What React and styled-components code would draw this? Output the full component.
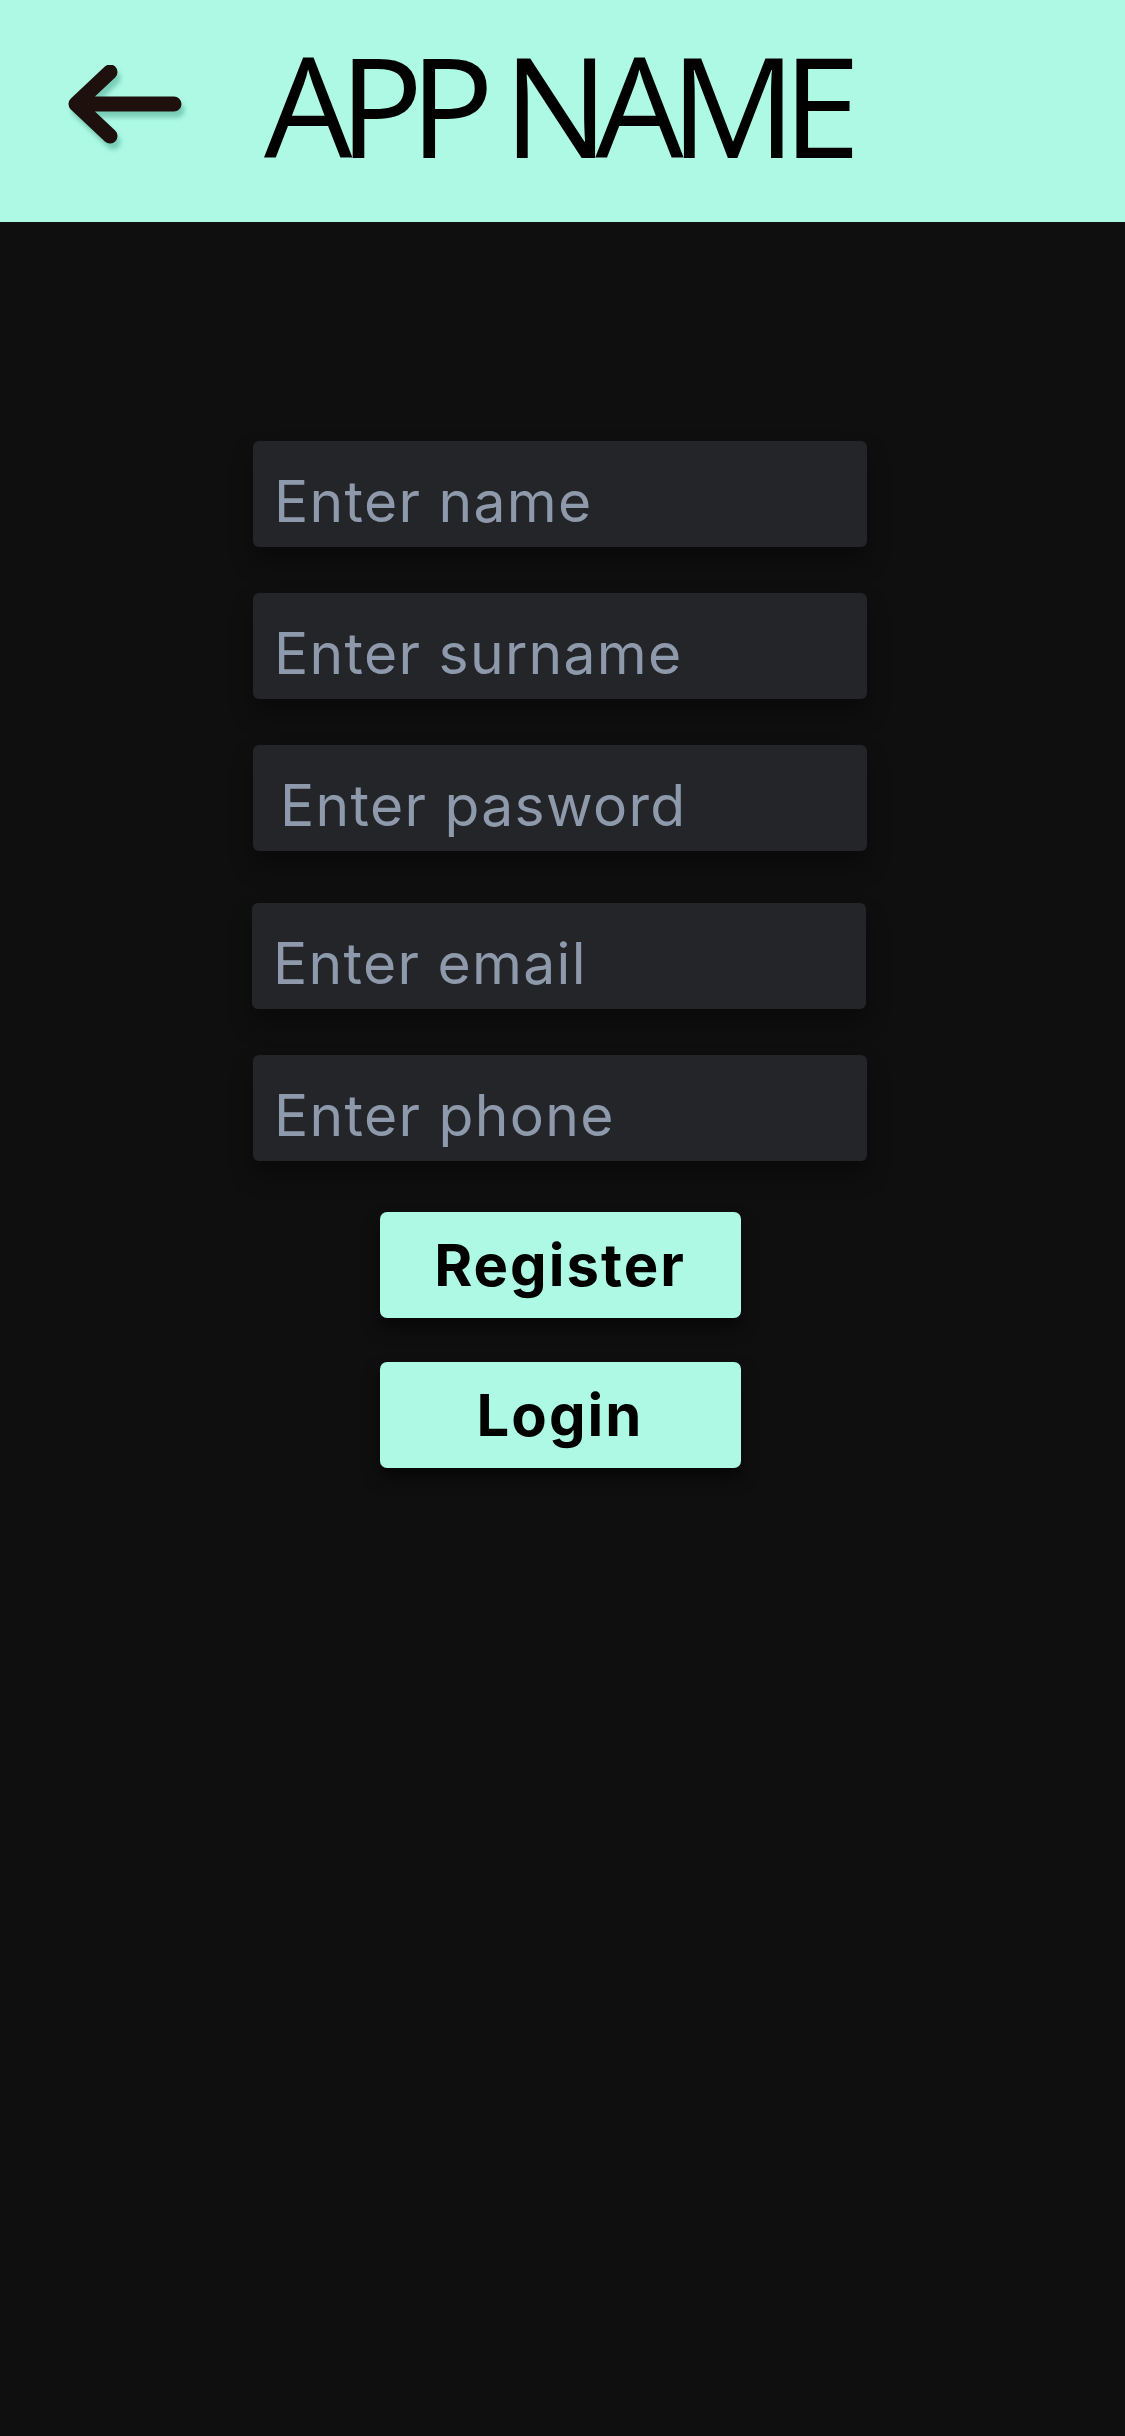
import React from 'react';
import styled, { createGlobalStyle } from 'styled-components';

const GlobalStyle = createGlobalStyle`
  * { box-sizing: border-box; }
  html, body {
    margin: 0;
    padding: 0;
    background: #0f0f0f;
  }
`;

const Page = styled.div`
  min-height: 2436px;
  background: #0f0f0f;
  font-family: Inter, "Noto Sans", sans-serif;
`;

const Header = styled.header`
  height: 222px;
  background: #adf9e4;
  display: flex;
  align-items: center;
`;

const BackButton = styled.button`
  width: 124px;
  height: 90px;
  margin: 0 0 12px 66px;
  padding: 0;
  border: none;
  background: transparent;
  display: flex;
  align-items: center;
  cursor: pointer;

  svg {
    filter: drop-shadow(3px 6px 2px rgba(80, 170, 145, 0.55));
  }
`;

const Title = styled.h1`
  margin: 0 0 14px 74px;
  font-family: "Open Sans", "Liberation Sans", sans-serif;
  font-weight: 400;
  font-size: 140px;
  letter-spacing: -13.5px;
  line-height: 1;
  color: #000;
`;

const Form = styled.form`
  display: flex;
  flex-direction: column;
  align-items: center;
  padding: 219px 5px 0 0;
`;

const Field = styled.input`
  width: 614px;
  height: 106px;
  margin-top: ${props => props.$gap}px;
  margin-left: ${props => props.$shift || 0}px;
  padding: 14px 0 0 ${props => props.$indent || 21}px;
  border: none;
  border-radius: 6px;
  background: #242528;
  box-shadow: 0 14px 22px rgba(0, 0, 0, 0.35);
  font-family: Inter, "Noto Sans", sans-serif;
  font-size: 57px;
  letter-spacing: 1.3px;
  color: #d0d6de;
  outline: none;

  &::placeholder {
    color: #8e9aab;
  }
`;

const Button = styled.button`
  width: 361px;
  height: 106px;
  margin-top: ${props => props.$gap}px;
  border: none;
  border-radius: 7px;
  background: #adf9e4;
  box-shadow: 0 10px 16px rgba(0, 0, 0, 0.55);
  font-family: Inter, "Noto Sans", sans-serif;
  font-weight: 700;
  font-size: 58px;
  letter-spacing: 2px;
  color: #000;
  cursor: pointer;
`;

const BackArrow = () => (
  <svg width="120" height="80" viewBox="0 0 120 80">
    <path
      d="M44 7 L10 39 L44 71 M10 39 L108 39"
      fill="none"
      stroke="#1e110d"
      strokeWidth="15"
      strokeLinecap="round"
      strokeLinejoin="round"
    />
  </svg>
);

const fields = [
  { placeholder: 'Enter name', gap: 0 },
  { placeholder: 'Enter surname', gap: 46 },
  { placeholder: 'Enter pasword', gap: 46, indent: 27, type: 'password' },
  { placeholder: 'Enter email', gap: 52, shift: -2 },
  { placeholder: 'Enter phone', gap: 46 },
];

export default function App() {
  return (
    <Page>
      <GlobalStyle />
      <Header>
        <BackButton aria-label="Back">
          <BackArrow />
        </BackButton>
        <Title>APP NAME</Title>
      </Header>
      <Form onSubmit={e => e.preventDefault()}>
        {fields.map(f => (
          <Field
            key={f.placeholder}
            type={f.type || 'text'}
            placeholder={f.placeholder}
            $gap={f.gap}
            $indent={f.indent}
            $shift={f.shift}
          />
        ))}
        <Button type="submit" $gap={51}>Register</Button>
        <Button type="button" $gap={44}>Login</Button>
      </Form>
    </Page>
  );
}
